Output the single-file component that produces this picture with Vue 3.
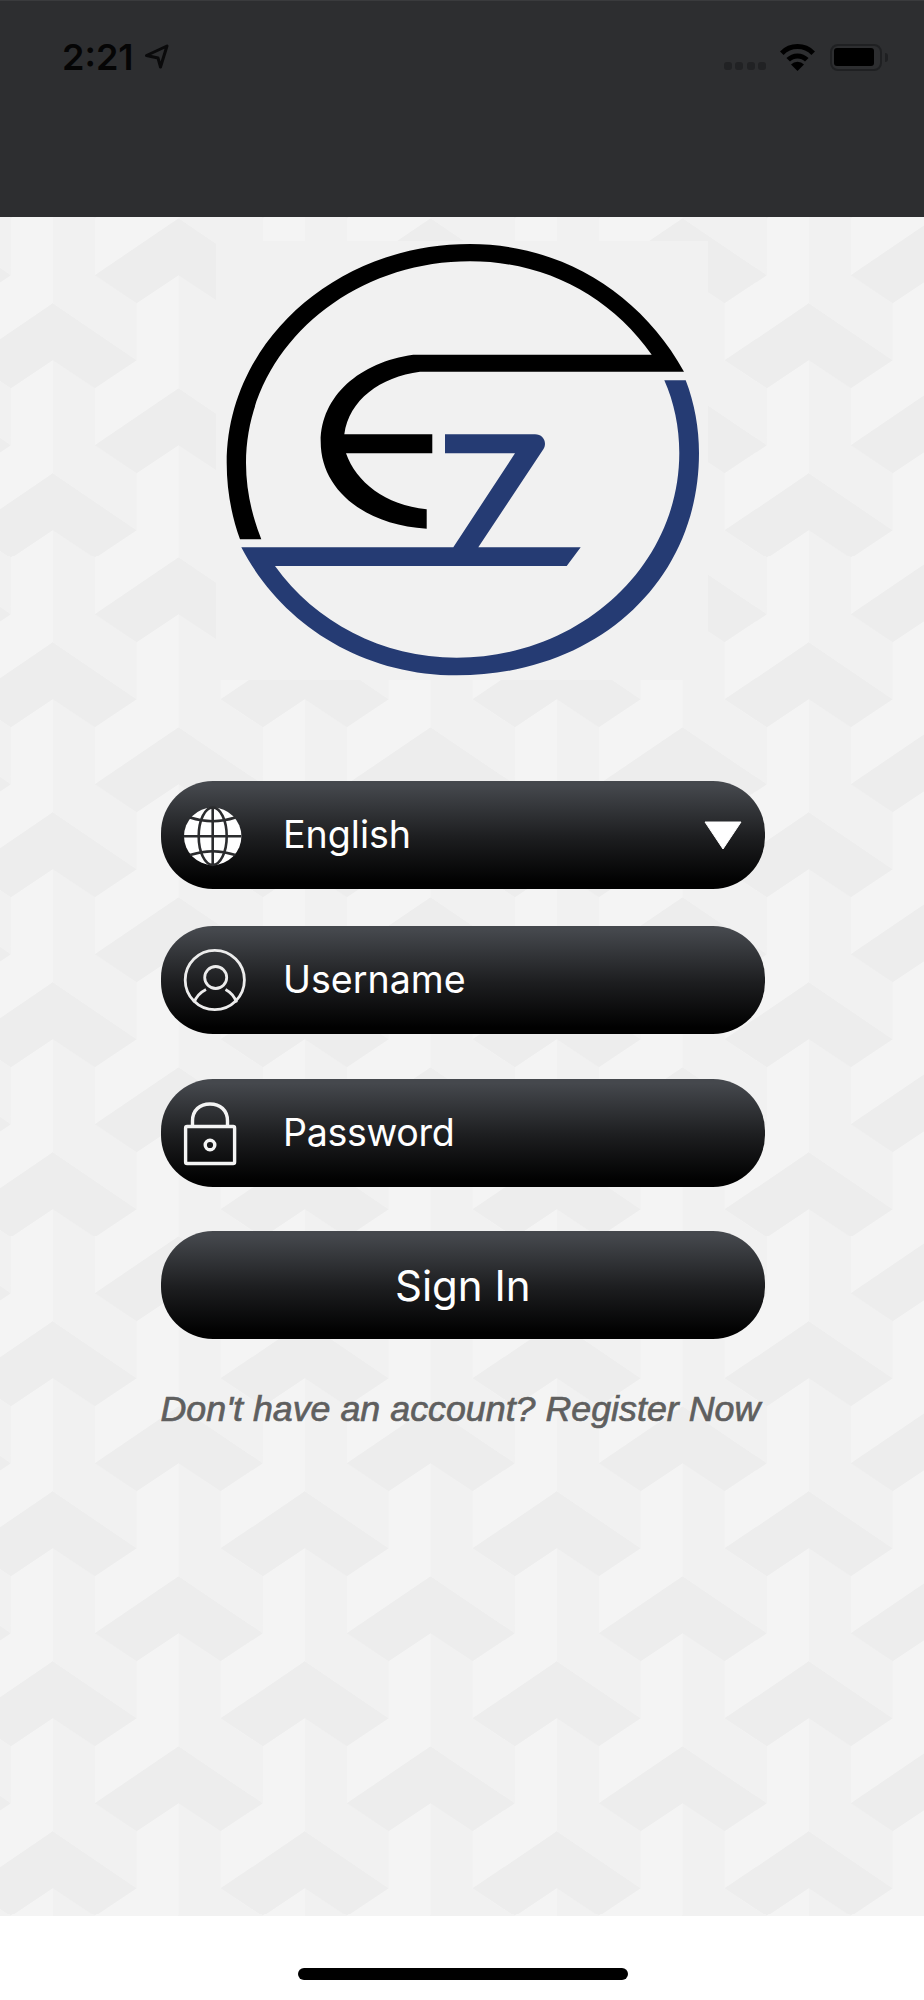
<template>
  <div class="screen">
    <header class="status-bar">
      <div class="status-left">
        <span class="time">2:21</span>
        <svg class="arrow" width="26" height="26" viewBox="0 0 26 26">
          <path d="M23 2 L2.5 11.5 L14 14 L16.5 23 Z" fill="none" stroke="#0a0a0b" stroke-width="3" stroke-linejoin="round" />
        </svg>
      </div>
      <div class="status-right">
        <div class="signal">
          <i v-for="n in 4" :key="n"></i>
        </div>
        <svg class="wifi" width="37" height="27" viewBox="0 0 37 27">
          <path d="M2.8 9.2 A22 22 0 0 1 34.2 9.2" fill="none" stroke="#000" stroke-width="5" />
          <path d="M9.2 15.8 A13 13 0 0 1 27.8 15.8" fill="none" stroke="#000" stroke-width="5" />
          <path d="M18.5 27 L12 20.6 A9 9 0 0 1 25 20.6 Z" fill="#000" />
        </svg>
        <div class="battery">
          <div class="battery-level"></div>
        </div>
        <div class="battery-nub"></div>
      </div>
    </header>

    <main class="login">
      <div class="logo-box">
        <svg class="logo" width="492" height="439" viewBox="216 241 492 439">
          <path fill="#000" d="M240 539.3 C231.5 516 226.7 490 226.7 463 C226.7 342 336 244 470 244 C560 244 640 292 684 371.7 L420 371.7 C380 377 349 400 344.3 434.3 L432.3 434.3 L432.3 453.3 L346 453.3 C356 482 385 505 426.7 509.3 L426.7 528.7 C365 525 320.7 490 320.7 441.7 C320.7 396 360 362 413.3 354.7 L651.7 354.7 C610 296 545 261.3 470 261.3 C347 261.3 246 351 246 463 C246 490 252 516 261.3 539.3 Z" />
          <path fill="#253b73" d="M241.3 547.3 L453.3 547.3 L515 453.3 L445 453.3 L445 434.3 L535 434.3 C543 434.3 547.5 442 543.5 449 L478.3 547.3 L580.7 547.3 L566.7 566 L275 566 C315 622 382 657.7 456.7 657.7 C580 657.7 679.3 566 679.3 453 C679.3 427 674 402 664.3 380.3 L685.7 380.3 C694.5 403 699 428 699 453 C699 582 596 675.3 456.7 675.3 C362 675.3 281 624 241.3 547.3 Z" />
        </svg>
      </div>

      <div class="form">
        <div class="pill language">
          <span class="icon-slot">
            <svg class="icon" width="64" height="64" viewBox="0 0 64 64">
              <circle cx="31.7" cy="33.2" r="28.7" fill="#fff" />
              <g fill="none" stroke="#2b2c2e" stroke-width="2.6">
                <path d="M3 33.2 H60.4" />
                <path d="M31.7 4.5 V62" />
                <ellipse cx="31.7" cy="33.2" rx="14" ry="28.7" />
                <path d="M9 14.5 Q31.7 22 54.4 14.5" />
                <path d="M9 52 Q31.7 44.4 54.4 52" />
              </g>
            </svg>
          </span>
          <span class="label">English</span>
          <svg class="caret" width="38" height="29" viewBox="0 0 38 29">
            <path d="M1 1 H37 L19 28 Z" fill="#fff" stroke="#fff" stroke-width="1" stroke-linejoin="round" />
          </svg>
        </div>

        <div class="pill username">
          <span class="icon-slot">
            <svg class="icon" width="64" height="64" viewBox="0 0 64 64">
              <g fill="none" stroke="#ececec" stroke-width="2.8">
                <circle cx="33.8" cy="32" r="29.6" />
                <circle cx="34.7" cy="29.5" r="11" />
                <path d="M13 54.5 C15.5 48 19 44.5 25 41.5" />
                <path d="M44.5 41.5 C50 44.5 53.5 48 55.5 54.5" />
              </g>
            </svg>
          </span>
          <span class="label">Username</span>
        </div>

        <div class="pill password">
          <span class="icon-slot">
            <svg class="icon" width="64" height="64" viewBox="0 0 64 64">
              <g fill="none" stroke="#f4f4f4" stroke-width="3.4">
                <rect x="4.6" y="25.5" width="49" height="37" rx="1.5" />
                <path d="M11.5 25.5 V20 C11.5 9 19 3 29 3 C39 3 46.5 9 46.5 20 V25.5" />
                <circle cx="29" cy="44" r="4.8" stroke-width="3.4" />
              </g>
            </svg>
          </span>
          <span class="label">Password</span>
        </div>

        <button class="pill sign-in">Sign In</button>

        <p class="register">Don't have an account? Register Now</p>
      </div>
    </main>

    <footer class="home-area">
      <div class="home-indicator"></div>
    </footer>
  </div>
</template>

<script setup>
</script>

<style>
html,
body {
  margin: 0;
  background: #fff;
}
</style>

<style scoped>
.screen {
  width: 924px;
  height: 2000px;
  display: flex;
  flex-direction: column;
  font-family: Inter, "Liberation Sans", sans-serif;
  overflow: hidden;
}

.status-bar {
  height: 217px;
  box-sizing: border-box;
  display: flex;
  justify-content: space-between;
  align-items: flex-start;
  padding: 43px 36px 0 62px;
  background: #2d2e30;
  border-top: 1px solid #3a3b3d;
}

.status-left {
  display: flex;
  align-items: center;
  gap: 10px;
}

.time {
  font-size: 36px;
  line-height: 26px;
  font-weight: 600;
  color: #050505;
}

.arrow {
  display: block;
}

.status-right {
  display: flex;
  align-items: flex-end;
}

.signal {
  display: flex;
  gap: 3.5px;
  margin-right: 13px;
  margin-bottom: 1px;
}

.signal i {
  display: block;
  width: 8px;
  height: 8px;
  border-radius: 3px;
  background: #212224;
}

.wifi {
  display: block;
  margin-right: 14px;
}

.battery {
  width: 52px;
  height: 27px;
  box-sizing: border-box;
  padding: 2px;
  border: 2.5px solid #1f2022;
  border-radius: 8px;
}

.battery-level {
  width: 40px;
  height: 18px;
  background: #000;
  border-radius: 3px;
}

.battery-nub {
  width: 3px;
  height: 9px;
  margin: 0 0 9px 3px;
  background: #1f2022;
  border-radius: 0 3px 3px 0;
}

.login {
  height: 1699px;
  display: flex;
  flex-direction: column;
  align-items: center;
  background-color: #f4f4f4;
  background-image: url("data:image/svg+xml,%3Csvg xmlns='http://www.w3.org/2000/svg' xmlns:xlink='http://www.w3.org/1999/xlink' width='252' height='170' viewBox='0 0 252 170'%3E%3Cdefs%3E%3Cg id='c'%3E%3Cpath fill='%23f1f1f1' d='M0 57 42 85V142L84 170V227L0 170Z'/%3E%3Cpath fill='%23ededed' d='M0 0 84 57 42 85 0 57-42 85-84 57Z'/%3E%3C/g%3E%3C/defs%3E%3Cuse xlink:href='%23c' x='52.7' y='86.25'/%3E%3Cuse xlink:href='%23c' x='304.7' y='86.25'/%3E%3Cuse xlink:href='%23c' x='52.7' y='-83.75'/%3E%3Cuse xlink:href='%23c' x='304.7' y='-83.75'/%3E%3Cuse xlink:href='%23c' x='178.7' y='1.25'/%3E%3Cuse xlink:href='%23c' x='-73.3' y='1.25'/%3E%3Cuse xlink:href='%23c' x='178.7' y='-168.75'/%3E%3Cuse xlink:href='%23c' x='-73.3' y='-168.75'/%3E%3C/svg%3E");
  background-size: 252px 169.75px;
  background-repeat: repeat;
}

.logo-box {
  width: 492px;
  height: 439px;
  margin-top: 24px;
  background: #f1f1f1;
}

.logo {
  display: block;
}

.form {
  width: 604.5px;
  margin-top: 101px;
  margin-left: 1.5px;
  display: flex;
  flex-direction: column;
}

.pill {
  height: 108px;
  box-sizing: border-box;
  display: flex;
  align-items: center;
  border: none;
  border-radius: 52px;
  background: linear-gradient(180deg, #45484d 4%, #1d1e20 52%, #010101 94%);
  color: #fff;
  font-family: inherit;
}

.username {
  margin-top: 37px;
}

.password {
  margin-top: 45px;
}

.password .label {
  letter-spacing: -0.3px;
}

.sign-in {
  width: 100%;
  margin-top: 44px;
  padding: 0;
  justify-content: center;
  font-size: 42px;
}

.icon-slot {
  width: 105.5px;
  flex: none;
  display: flex;
  justify-content: center;
  margin-right: 17px;
}

.icon {
  display: block;
  overflow: visible;
}

.label {
  font-size: 37.6px;
  padding-bottom: 2px;
}

.caret {
  margin-left: auto;
  margin-right: 23px;
}

.register {
  margin: 50px 0 0;
  font-family: "Liberation Sans", Arial, sans-serif;
  font-style: italic;
  font-size: 35.8px;
  color: #5f5f5f;
  -webkit-text-stroke: 0.7px #5f5f5f;
  white-space: nowrap;
}

.home-area {
  flex: 1;
  padding-top: 52px;
  background: #fff;
}

.home-indicator {
  width: 330px;
  height: 12px;
  margin-left: 298px;
  background: #000;
  border-radius: 6px;
}
</style>
